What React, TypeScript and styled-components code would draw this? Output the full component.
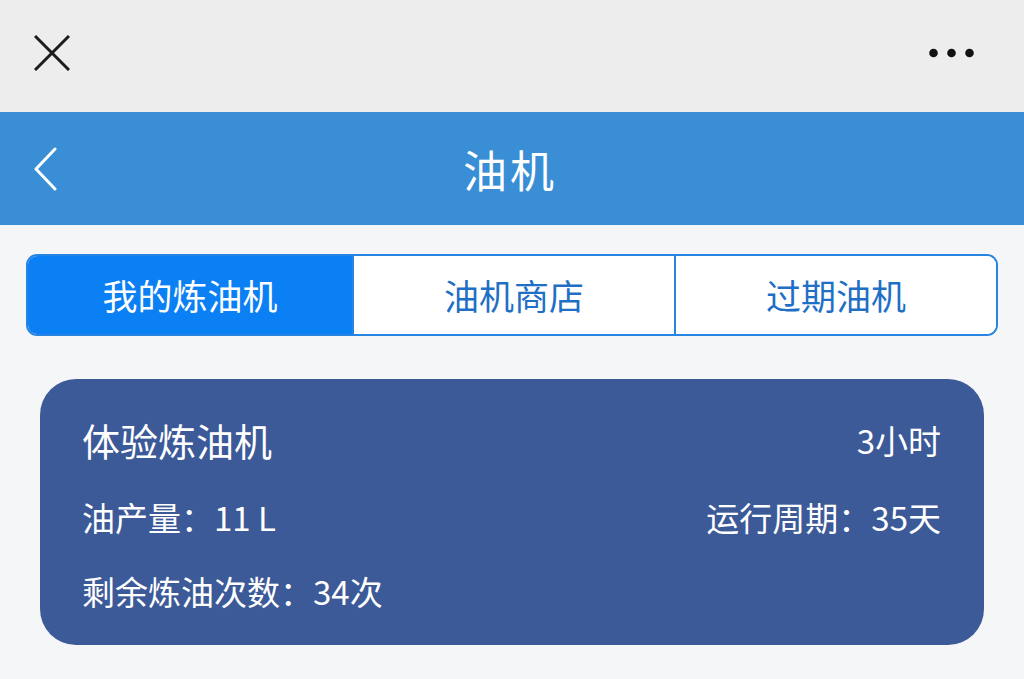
import React, { useState } from 'react';
import styled, { createGlobalStyle } from 'styled-components';

const GlobalStyle = createGlobalStyle`
  html, body {
    margin: 0;
    padding: 0;
    background: #f5f6f8;
    font-family: "Noto Sans CJK SC", "Liberation Sans", sans-serif;
  }
`;

const Page = styled.div`
  width: 1024px;
  min-height: 679px;
  background: #f5f6f8;
  overflow: hidden;
`;

const TopBar = styled.div`
  height: 112px;
  background: #ededed;
  display: flex;
  align-items: center;
  justify-content: space-between;
  padding: 0 50px 6px 34px;
  box-sizing: border-box;
`;

const IconButton = styled.button`
  background: none;
  border: none;
  padding: 0;
  display: flex;
  align-items: center;
  cursor: pointer;
`;

const Header = styled.div`
  height: 113px;
  background: #398ed6;
  display: grid;
  grid-template-columns: 120px 1fr 120px;
  align-items: center;
  padding-left: 34px;
  box-sizing: border-box;
`;

const Title = styled.h1`
  margin: 0;
  text-align: center;
  color: #fff;
  font-size: 44px;
  font-weight: 400;
  letter-spacing: 3px;
  padding-right: 38px;
`;

const Content = styled.div`
  padding: 29px 26px 0 26px;
`;

const Tabs = styled.div`
  display: grid;
  grid-template-columns: 324px 322px 1fr;
  height: 82px;
  border: 2px solid #2784e2;
  border-radius: 11px;
  overflow: hidden;
  box-sizing: border-box;
  background: #fff;
`;

const Tab = styled.button<{ $active?: boolean }>`
  border: none;
  border-left: ${p => (p.$active ? 'none' : '2px solid #2784e2')};
  background: ${p => (p.$active ? '#0b80f4' : '#fff')};
  color: ${p => (p.$active ? '#fff' : '#1f6fc6')};
  font-family: inherit;
  font-size: 35px;
  font-weight: 400;
  padding: 0 0 2px 0;
  cursor: pointer;
  &:first-child {
    border-left: none;
  }
`;

const Card = styled.div`
  margin: 43px 14px 0 14px;
  background: #3c5998;
  border-radius: 36px;
  padding: 38px 43px 34px 42px;
  display: flex;
  flex-direction: column;
  gap: 35px;
  color: #fff;
`;

const Row = styled.div`
  display: flex;
  justify-content: space-between;
  align-items: center;
`;

const CardTitle = styled.span`
  font-size: 38px;
  line-height: 46px;
  font-weight: 400;
`;

const Info = styled.span`
  font-size: 33px;
  line-height: 39px;
  font-weight: 400;
`;

const tabs = ['我的炼油机', '油机商店', '过期油机'];

export default function App() {
  const [active, setActive] = useState(0);

  return (
    <Page>
      <GlobalStyle />
      <TopBar>
        <IconButton aria-label="关闭">
          <svg width="36" height="36" viewBox="0 0 36 36">
            <path d="M1 1 L35 35 M35 1 L1 35" stroke="#1c1c1c" strokeWidth="3" fill="none" />
          </svg>
        </IconButton>
        <IconButton aria-label="更多">
          <svg width="45" height="10" viewBox="0 0 45 10">
            <circle cx="4.5" cy="5" r="4.3" fill="#111" />
            <circle cx="22.5" cy="5" r="4.3" fill="#111" />
            <circle cx="40.5" cy="5" r="4.3" fill="#111" />
          </svg>
        </IconButton>
      </TopBar>
      <Header>
        <IconButton aria-label="返回">
          <svg width="24" height="44" viewBox="0 0 24 44">
            <path d="M21 2 L2 22 L21 42" stroke="#fff" strokeWidth="3" fill="none" strokeLinecap="round" strokeLinejoin="round" />
          </svg>
        </IconButton>
        <Title>油机</Title>
        <span />
      </Header>
      <Content>
        <Tabs>
          {tabs.map((t, i) => (
            <Tab key={t} $active={active === i} onClick={() => setActive(i)}>
              {t}
            </Tab>
          ))}
        </Tabs>
        <Card>
          <Row>
            <CardTitle>体验炼油机</CardTitle>
            <Info>3小时</Info>
          </Row>
          <Row>
            <Info>油产量：11 L</Info>
            <Info>运行周期：35天</Info>
          </Row>
          <Row>
            <Info>剩余炼油次数：34次</Info>
          </Row>
        </Card>
      </Content>
    </Page>
  );
}
